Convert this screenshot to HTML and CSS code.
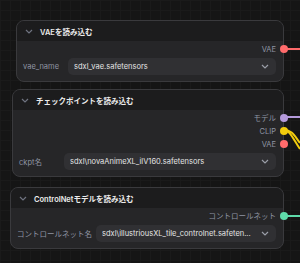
FILE: index.html
```html
<!DOCTYPE html>
<html>
<head>
  <title>Nodes</title>
  <link rel="stylesheet" href="styles.css">
</head>
<body>
  <div class="canvas">
    <svg class="wires" width="300" height="263">
      <line x1="284" y1="49" x2="300" y2="49" stroke="#ff6b6b" stroke-width="2"/>
      <line x1="284" y1="117" x2="300" y2="117" stroke="#b59bdc" stroke-width="2"/>
      <path d="M284 130 C292 130 294 135 300 143" stroke="#f2cc0d" stroke-width="2" fill="none"/>
      <path d="M284 130 C290 130 293 139 300 149" stroke="#f2cc0d" stroke-width="2" fill="none"/>
      <line x1="284" y1="216" x2="300" y2="216" stroke="#5fdcab" stroke-width="2"/>
    </svg>

    <div class="node node-vae">
      <div class="node-header">
        <svg class="chev" width="8" height="5" viewBox="0 0 8 5"><path d="M1 1 L4 4 L7 1" stroke="#6f7380" stroke-width="1.2" fill="none"/></svg>
        <span class="title">VAEを読み込む</span>
      </div>
      <div class="node-body">
        <div class="output">VAE<span class="socket red"></span></div>
        <div class="widget">
          <span class="label">vae_name</span>
          <div class="select">
            <span class="value">sdxl_vae.safetensors</span>
            <svg width="8" height="5" viewBox="0 0 8 5"><path d="M1 1 L4 4 L7 1" stroke="#9a9ea8" stroke-width="1.2" fill="none"/></svg>
          </div>
        </div>
      </div>
    </div>

    <div class="node node-ckpt">
      <div class="node-header">
        <svg class="chev" width="8" height="5" viewBox="0 0 8 5"><path d="M1 1 L4 4 L7 1" stroke="#6f7380" stroke-width="1.2" fill="none"/></svg>
        <span class="title">チェックポイントを読み込む</span>
      </div>
      <div class="node-body">
        <div class="output">モデル<span class="socket purple"></span></div>
        <div class="output">CLIP<span class="socket yellow"></span></div>
        <div class="output">VAE<span class="socket red"></span></div>
        <div class="widget">
          <span class="label">ckpt名</span>
          <div class="select">
            <span class="value">sdxl\novaAnimeXL_ilV160.safetensors</span>
            <svg width="8" height="5" viewBox="0 0 8 5"><path d="M1 1 L4 4 L7 1" stroke="#9a9ea8" stroke-width="1.2" fill="none"/></svg>
          </div>
        </div>
      </div>
    </div>

    <div class="node node-cnet">
      <div class="node-header">
        <svg class="chev" width="8" height="5" viewBox="0 0 8 5"><path d="M1 1 L4 4 L7 1" stroke="#6f7380" stroke-width="1.2" fill="none"/></svg>
        <span class="title">ControlNetモデルを読み込む</span>
      </div>
      <div class="node-body">
        <div class="output">コントロールネット<span class="socket green"></span></div>
        <div class="widget">
          <span class="label">コントロールネット名</span>
          <div class="select">
            <span class="value">sdxl\illustriousXL_tile_controlnet.safeten...</span>
            <svg width="8" height="5" viewBox="0 0 8 5"><path d="M1 1 L4 4 L7 1" stroke="#9a9ea8" stroke-width="1.2" fill="none"/></svg>
          </div>
        </div>
      </div>
    </div>
  </div>
</body>
</html>
```

FILE: styles.css
```css
body {
  margin: 0;
  padding: 0;
  background-color: #151515;
  font-family: Inter, "Noto Sans CJK JP", sans-serif;
}

.canvas {
  position: relative;
  width: 300px;
  height: 263px;
  overflow: hidden;
  background-color: #151515;
  background-image:
    linear-gradient(to right, #1a1a1a 1px, transparent 1px),
    linear-gradient(to bottom, #1a1a1a 1px, transparent 1px);
  background-size: 10px 10px;
}

.wires {
  position: absolute;
  left: 0;
  top: 0;
}

.node {
  position: absolute;
  box-sizing: border-box;
  background-color: #262628;
  border: 1px solid #3a3a3d;
  border-radius: 8px;
}

.node-vae {
  left: 16px;
  top: 20px;
  width: 268px;
}

.node-ckpt {
  left: 12px;
  top: 89px;
  width: 272px;
}

.node-cnet {
  left: 10px;
  top: 187px;
  width: 274px;
}

.node-header {
  display: flex;
  align-items: center;
  gap: 7px;
  height: 20px;
  padding-left: 8px;
  background-color: #1c1c1d;
  border-radius: 7px 7px 0 0;
}

.chev {
  flex-shrink: 0;
}

.title {
  color: #ececec;
  font-size: 7.5px;
  font-weight: 600;
}

.node-body {
  display: flex;
  flex-direction: column;
  padding: 2px 7px 6px 6px;
}

.output {
  position: relative;
  height: 13px;
  line-height: 13px;
  text-align: right;
  color: #8f95a3;
  font-size: 7.5px;
}

.socket {
  position: absolute;
  right: -12px;
  top: 2px;
  width: 8px;
  height: 8px;
  border-radius: 50%;
}

.red { background-color: #ff6b6b; }
.purple { background-color: #b59bdc; }
.yellow { background-color: #f2cc0d; }
.green { background-color: #5fdcab; }

.widget {
  display: flex;
  align-items: center;
  gap: 4px;
  margin-top: 2px;
}

.label {
  min-width: 41px;
  color: #8f95a3;
  font-size: 7.5px;
  white-space: nowrap;
}

.select {
  flex: 1;
  min-width: 0;
  display: flex;
  align-items: center;
  gap: 6px;
  height: 17px;
  padding: 0 7px 0 6px;
  background-color: #303033;
  border-radius: 5px;
}

.value {
  flex: 1;
  min-width: 0;
  color: #e4e4e4;
  font-size: 7.5px;
  white-space: nowrap;
  overflow: hidden;
}
```
